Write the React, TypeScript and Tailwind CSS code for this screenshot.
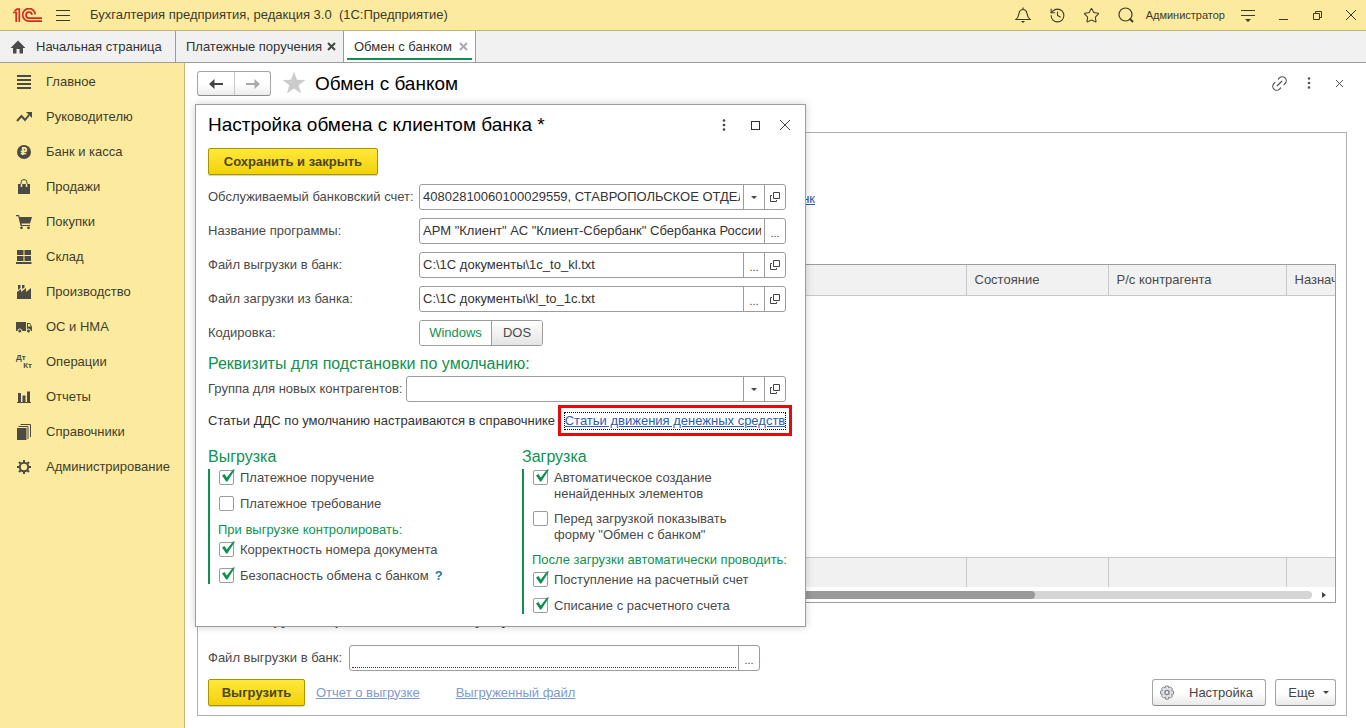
import type { ReactNode } from 'react';
import { Link2, Star, History } from 'lucide-react';

function Svg({ children, size = 16 }: { children: ReactNode; size?: number }) {
  return (
    <svg width={size} height={size} viewBox="0 0 16 16" fill="currentColor" aria-hidden="true">
      {children}
    </svg>
  );
}

const sections: { label: string; icon: ReactNode }[] = [
  { label: 'Главное', icon: <Svg><path d="M1 1h14v2H1zM1 5h14v2H1zM1 9h14v2H1zM1 13h14v2H1z" /></Svg> },
  {
    label: 'Руководителю',
    icon: (
      <Svg>
        <path d="M1 12l4.5-5 3.5 4 4-5" fill="none" stroke="currentColor" strokeWidth="2" />
        <path d="M10 3h6v6z" />
      </Svg>
    )
  },
  {
    label: 'Банк и касса',
    icon: (
      <span className="flex size-[14px] items-center justify-center rounded-full bg-[#4b4a45] font-['DejaVu_Sans'] text-[10px] font-bold leading-none text-[#fceb9e]">₽</span>
    )
  },
  {
    label: 'Продажи',
    icon: (
      <Svg>
        <path d="M2 5h12v10H2z" />
        <path d="M5.500 8V4a2.500 2.500 0 0 1 5 0v4" fill="none" stroke="#fceb9e" strokeWidth="1.500" />
        <path d="M5 5V3.500a3 3 0 0 1 6 0V5" fill="none" stroke="currentColor" strokeWidth="1" />
      </Svg>
    )
  },
  {
    label: 'Покупки',
    icon: (
      <Svg>
        <path d="M0 1h3l.7 2H16l-2 6.500H5.500l.3 1.500H14v1H4.600L2.200 2.200H0z" />
        <circle cx="5.500" cy="13.800" r="1.400" />
        <circle cx="12.500" cy="13.800" r="1.400" />
      </Svg>
    )
  },
  { label: 'Склад', icon: <Svg><path d="M1 1h6.500v5H1zM8.500 1H15v5H8.500zM1 7h6.500v5H1zM8.500 7H15v5H8.500zM0 13h15.500v2H0z" /></Svg> },
  { label: 'Производство', icon: <Svg><path d="M1 15V8l4-3v3l5-4v4l5-4v11zM2 1h2.500v3L2 6zM6 1h2.500v2.500L6 5z" /></Svg> },
  {
    label: 'ОС и НМА',
    icon: (
      <Svg>
        <path d="M0 3h10v9H0zM11 4h3l2 4v4h-5z" />
        <path d="M12 5h1.700l1 2.500H12z" fill="#fceb9e" />
        <circle cx="3.800" cy="12" r="2" stroke="#fceb9e" />
        <circle cx="12.500" cy="12" r="2" stroke="#fceb9e" />
      </Svg>
    )
  },
  {
    label: 'Операции',
    icon: (
      <span className="flex w-4 flex-col text-[8px] font-bold leading-[8px]">
        <span>Дт</span>
        <span className="self-end">Кт</span>
      </span>
    )
  },
  { label: 'Отчеты', icon: <Svg><path d="M1 13h14v1H1zM2 4h3v9H2zM6.500 6.500h3V13h-3zM11 2.500h3V13h-3z" /></Svg> },
  {
    label: 'Справочники',
    icon: (
      <Svg>
        <path d="M1 4h9.500v12H1z" />
        <path d="M2.500 2.500h9.500V15M4.500.5H14.500V13" fill="none" stroke="currentColor" strokeWidth="1" />
      </Svg>
    )
  },
  {
    label: 'Администрирование',
    icon: (
      <Svg>
        <circle cx="8" cy="8" r="4.200" fill="none" stroke="currentColor" strokeWidth="2" />
        <path
          d="M8 1v3M8 12v3M1 8h3M12 8h3M3 3l2 2M11 11l2 2M13 3l-2 2M5 11l-2 2"
          stroke="currentColor"
          strokeWidth="2"
        />
      </Svg>
    )
  }
];

function Dots() {
  return <Svg><circle cx="8" cy="3.500" r="1.300" /><circle cx="8" cy="8" r="1.300" /><circle cx="8" cy="12.500" r="1.300" /></Svg>;
}

function Cross({ size, width = 1 }: { size: number; width?: number }) {
  return (
    <svg width={size} height={size} viewBox={`0 0 ${size} ${size}`} stroke="currentColor" strokeWidth={width} aria-hidden="true">
      <path d={`M1 1L${size - 1} ${size - 1}M${size - 1} 1L1 ${size - 1}`} />
    </svg>
  );
}

function Caret() {
  return <svg width="6" height="3" viewBox="0 0 6 3" fill="currentColor" aria-hidden="true"><path d="M0 0h6L3 3z" /></svg>;
}

function OpenIcon() {
  return (
    <svg width="10" height="10" viewBox="0 0 10 10" fill="none" stroke="currentColor" aria-hidden="true">
      <path d="M3.500.5h6v6h-6zM2 3.500H.5v6h6V8" />
    </svg>
  );
}

type Action = 'list' | 'pick' | 'open';
const actionNames = { list: 'Показать список', pick: 'Выбрать', open: 'Открыть' };

function Field({ id, value, actions, required }: { id: string; value: string; actions: Action[]; required?: boolean }) {
  return (
    <div className="flex h-[26px] min-w-0 flex-1 overflow-hidden rounded-[3px] border border-[#9c9c9c] bg-white">
      <div className="flex min-w-0 flex-1 flex-col px-[2px] py-[2px]">
        <input
          id={id}
          defaultValue={value}
          className="min-h-0 w-full flex-1 bg-transparent px-px text-[#333] outline-none"
        />
        {required && <div className="border-b border-dotted border-b-[#c00000]" />}
      </div>
      {actions.map(a => (
        <button key={a} type="button" aria-label={actionNames[a]} className="flex w-[21px] items-center justify-center border-l border-[#9c9c9c] text-[#444]">
          {a === 'list' && <Caret />}
          {a === 'pick' && <span className="pt-1 text-[11px]">...</span>}
          {a === 'open' && <OpenIcon />}
        </button>
      ))}
    </div>
  );
}

function Check({ label, checked, children }: { label: string; checked?: boolean; children?: ReactNode }) {
  return (
    <div className="flex">
      <label className="flex items-start gap-[5px] whitespace-pre-line">
        <span className="relative size-4 shrink-0">
          <input
            type="checkbox"
            defaultChecked={checked}
            className="peer block size-[15px] appearance-none rounded-[2px] border border-[#9c9c9c] bg-white"
          />
          <svg className="pointer-events-none absolute -top-px left-px hidden peer-checked:block" width="15" height="14" viewBox="0 0 15 14" aria-hidden="true">
            <path d="M2 6.500l2.500-1.500 2.300 3.500L13 .5h2L7.700 12Q6.800 13.300 5.800 12z" fill="#0f9250" />
          </svg>
        </span>
        {label}
      </label>
      {children}
    </div>
  );
}

const yellowButton =
  'h-[27px] rounded-[2px] border border-[#a89600] bg-linear-to-b from-[#ffe838] to-[#f2d200] font-bold text-[#4d4615] shadow-[0_1px_1px_#00000030]';
const grayButton =
  'flex h-[27px] items-center rounded-[3px] border border-[#a5a5a5] border-b-[#8a8a8a] bg-linear-to-b from-white from-50% to-[#e9e9e9] text-[#444]';

function SettingsDialog() {
  const rows: { id: string; label: string; value: string; actions: Action[] }[] = [
    { id: 'account', label: 'Обслуживаемый банковский счет:', value: '40802810060100029559, СТАВРОПОЛЬСКОЕ ОТДЕЛ', actions: ['list', 'open'] },
    { id: 'program', label: 'Название программы:', value: 'АРМ "Клиент" АС "Клиент-Сбербанк" Сбербанка России', actions: ['pick'] },
    { id: 'export', label: 'Файл выгрузки в банк:', value: 'C:\\1С документы\\1c_to_kl.txt', actions: ['pick', 'open'] },
    { id: 'import', label: 'Файл загрузки из банка:', value: 'C:\\1С документы\\kl_to_1c.txt', actions: ['pick', 'open'] }
  ];

  return (
    <section role="dialog" aria-labelledby="dialog-title" className="absolute left-[195px] top-[104px] w-[611px] border border-[#9c9c9c] bg-white pb-3 pl-3 shadow-[0_0_8px_#00000030]">
      <div className="mb-[3px] flex h-10 items-center pr-[14px]">
        <h2 id="dialog-title" className="flex-1 text-[19px] text-black">Настройка обмена с клиентом банка *</h2>
        <div className="flex items-center gap-[19px] text-[#444]">
          <button type="button" aria-label="Еще" className="w-4"><Dots /></button>
          <button type="button" aria-label="Развернуть" className="size-[9px] border border-[#333]" />
          <button type="button" aria-label="Закрыть"><Cross size={12} /></button>
        </div>
      </div>
      <div className="pr-[19px]">
        <button type="button" className={`${yellowButton} w-[170px]`}>Сохранить и закрыть</button>
        <div className="mt-[9px] flex flex-col gap-2">
          {rows.map(r => (
            <div key={r.id} className="flex items-center">
              <label htmlFor={r.id} className="w-[211px] shrink-0">{r.label}</label>
              <Field id={r.id} value={r.value} actions={r.actions} />
            </div>
          ))}
          <div className="flex items-center">
            <span className="w-[211px] shrink-0">Кодировка:</span>
            <div className="flex h-[26px] overflow-hidden rounded-[3px] border border-[#9c9c9c]">
              <button type="button" aria-pressed="true" className="w-[72px] border-r border-[#9c9c9c] bg-white text-[#0f9250]">Windows</button>
              <button type="button" aria-pressed="false" className="w-[50px] bg-linear-to-b from-white to-[#e4e4e4]">DOS</button>
            </div>
          </div>
        </div>
        <h3 className="flex h-[30px] items-center pt-1.5 text-[16px] text-[#0f9250]">Реквизиты для подстановки по умолчанию:</h3>
        <div className="flex items-center">
          <label htmlFor="group" className="w-[198px] shrink-0">Группа для новых контрагентов:</label>
          <Field id="group" value="" actions={['list', 'open']} />
        </div>
      </div>
      <div className="mt-[3px] flex items-center gap-1 text-[#333]">
        <span className="w-[346px] whitespace-nowrap">Статьи ДДС по умолчанию настраиваются в справочнике</span>
        <div className="flex h-[31px] w-[234px] items-center justify-center border-3 border-[#e60a0f]">
          <a href="#articles" className="whitespace-nowrap border border-dotted border-black leading-4 text-[#2d5cb0] underline">Статьи движения денежных средств</a>
        </div>
      </div>
      <div className="mt-[9px] flex items-start">
        <div className="w-[314px]">
          <h3 className="text-[16px] leading-6 text-[#0f9250]">Выгрузка</h3>
          <div className="flex flex-col gap-[10px] border-l-2 border-[#0f9250] pl-[9px] pt-px leading-4">
            <Check label="Платежное поручение" checked />
            <Check label="Платежное требование" />
            <div className="flex flex-col gap-1">
              <h4 className="-ml-px text-[#0f9250]">При выгрузке контролировать:</h4>
              <Check label="Корректность номера документа" checked />
            </div>
            <Check label="Безопасность обмена с банком" checked>
              <button type="button" aria-label="Справка" className="ml-1.5 font-bold text-[#1c7ca8]">?</button>
            </Check>
          </div>
        </div>
        <div>
          <h3 className="text-[16px] leading-6 text-[#0f9250]">Загрузка</h3>
          <div className="flex flex-col border-l-2 border-[#0f9250] pl-[9px] pt-px leading-4">
            <Check label={'Автоматическое создание\nненайденных элементов'} checked />
            <div className="my-[9px]">
              <Check label={'Перед загрузкой показывать\nформу "Обмен с банком"'} />
            </div>
            <h4 className="-ml-px mb-1 text-[#0f9250]">После загрузки автоматически проводить:</h4>
            <Check label="Поступление на расчетный счет" checked />
            <div className="mt-[10px]">
              <Check label="Списание с расчетного счета" checked />
            </div>
          </div>
        </div>
      </div>
    </section>
  );
}

function PaymentsTable() {
  const cell = 'border-l border-[#c8c8c8] px-2';
  return (
    <div className="mt-[55px] flex min-h-0 flex-1 flex-col border border-[#9c9c9c]">
      <div className="min-h-0 flex-1">
        <table className="h-full w-full table-fixed border-collapse text-left">
          <colgroup>
            <col />
            <col className="w-[142px]" />
            <col className="w-[178px]" />
            <col className="w-[49px]" />
          </colgroup>
          <thead className="bg-[#f1f1f1]">
            <tr className="h-[30px] border-b border-[#c8c8c8]">
              <td />
              <th className={`${cell} font-normal`}>Состояние</th>
              <th className={`${cell} font-normal`}>Р/с контрагента</th>
              <th className={`${cell} overflow-hidden pr-0 font-normal`}>Назнач</th>
            </tr>
          </thead>
          <tbody>
            <tr><td colSpan={4} /></tr>
          </tbody>
          <tfoot className="bg-[#f1f1f1]">
            <tr className="h-[30px] border-t border-[#c8c8c8]">
              <td />
              <td className={cell} />
              <td className={cell} />
              <td className={cell} />
            </tr>
          </tfoot>
        </table>
      </div>
      <div className="flex h-[15px] items-center gap-[10px] pl-9 pr-[9px] text-[#444]">
        <div className="h-2 flex-1 rounded-full bg-[#d5d5d5]">
          <div className="h-2 w-[74%] rounded-full bg-[#999]" />
        </div>
        <svg width="4" height="6" viewBox="0 0 4 6" fill="currentColor" aria-hidden="true"><path d="M0 0l4 3-4 3z" /></svg>
      </div>
    </div>
  );
}

export default function App() {
  return (
    <div className="relative flex h-screen min-h-[700px] flex-col overflow-hidden bg-white font-['Liberation_Sans',Arial,sans-serif] text-[13px] text-[#4a4a4a]">
      <header className="flex h-[31px] shrink-0 items-center border-b border-[#bdb27c] bg-[#fceb9e] pl-[13px] pr-[9px] text-[#3d3a2c]">
        <svg width="30" height="15" viewBox="0 0 30 15" fill="none" stroke="#d8291c" strokeWidth="1.700" role="img" aria-label="1С">
          <path d="M0 4.500h3.200V14M1.500 3L4 1.200h2.300V14" />
          <path d="M22.200 6.500A6.300 6.300 0 1 0 16 13.200H29M19 6.800A3 3 0 1 0 16 10.200H29" />
        </svg>
        <button type="button" aria-label="Меню" className="ml-[13px] flex w-[14px] flex-col gap-1">
          <span className="h-px bg-current" />
          <span className="h-px bg-current" />
          <span className="h-px bg-current" />
        </button>
        <h1 className="ml-5 flex-1 whitespace-pre">Бухгалтерия предприятия, редакция 3.0  (1С:Предприятие)</h1>
        <button type="button" aria-label="Уведомления">
          <svg width="16" height="16" viewBox="0 0 16 16" fill="none" stroke="currentColor" strokeWidth="1.200" aria-hidden="true">
            <path d="M1 12.500h14c-2-1.500-2.500-3-3-6C11.600 4 10.500 2.500 8 2.500S4.400 4 4 6.500c-.5 3-1 4.500-3 6zM8 .5v2" />
            <path d="M6 14h4l-2 2z" fill="currentColor" stroke="none" />
          </svg>
        </button>
        <button type="button" aria-label="История" className="ml-[18px]"><History size={17} strokeWidth={1.5} /></button>
        <button type="button" aria-label="Избранное" className="ml-[17px]"><Star size={17} strokeWidth={1.5} /></button>
        <button type="button" aria-label="Поиск" className="ml-[18px]">
          <svg width="16" height="16" viewBox="0 0 16 16" fill="none" stroke="currentColor" aria-hidden="true">
            <circle cx="7.500" cy="7.500" r="6.500" strokeWidth="1.200" />
            <path d="M11.500 11.500l3.500 3.500" strokeWidth="2" />
          </svg>
        </button>
        <button type="button" className="ml-3 text-[11px]">Администратор</button>
        <button type="button" aria-label="Настройки" className="ml-4">
          <svg width="14" height="13" viewBox="0 0 14 13" fill="currentColor" aria-hidden="true"><path d="M0 1h14v1H0zM0 6h14v1H0zM4 10h6l-3 3z" /></svg>
        </button>
        <button type="button" aria-label="Свернуть" className="ml-6 h-[10px] w-[9px] border-b border-current" />
        <button type="button" aria-label="Восстановить" className="ml-[25px]">
          <svg width="9" height="9" viewBox="0 0 9 9" fill="none" stroke="currentColor" aria-hidden="true"><path d="M.5 2.500h6v6h-6zM2.500 2V.5h6v6H7" /></svg>
        </button>
        <button type="button" aria-label="Закрыть" className="ml-[23px]"><Cross size={12} /></button>
      </header>

      <nav className="flex h-8 shrink-0 border-b border-[#9c9c9c] bg-[#f1f1f1] text-[#333]">
        <a href="#home" className="flex w-[176px] items-center border-r border-[#9c9c9c] pl-[10px]">
          <Svg><path d="M8 1.500L.5 9H3v5.500h3.500V10h3v4.500H13V9h2.500z" fill="#4a4a4a" /></Svg>
          <span className="ml-[10px]">Начальная страница</span>
        </a>
        <div className="flex w-[168px] items-center border-r border-[#9c9c9c] pl-[10px]">
          <a href="#orders" className="w-[141px] whitespace-nowrap">Платежные поручения</a>
          <button type="button" aria-label="Закрыть вкладку" className="text-[#444]"><Cross size={9} width={2} /></button>
        </div>
        <div className="flex w-[132px] flex-col border-r border-[#9c9c9c] bg-white px-[3px]">
          <div className="flex flex-1 items-center pl-[7px] pt-1">
            <a href="#exchange" aria-current="page" className="w-[105px] whitespace-nowrap">Обмен с банком</a>
            <button type="button" aria-label="Закрыть вкладку" className="text-[#aaa]"><Cross size={9} width={2} /></button>
          </div>
          <div className="mb-[2px] h-[2px] bg-[#0f9250]" />
        </div>
      </nav>

      <div className="flex min-h-0 flex-1">
        <aside className="w-[185px] shrink-0 border-r border-[#c4b97f] bg-[#fceb9e] pt-px text-[#403d2e]">
          {sections.map(s => (
            <a key={s.label} href="#section" className="flex h-[35px] items-center pl-4">
              <span className="flex w-4 justify-center text-[#4b4a45]">{s.icon}</span>
              <span className="ml-[14px]">{s.label}</span>
            </a>
          ))}
        </aside>

        <main className="flex min-w-0 flex-1 flex-col pb-3 pl-3 pr-[19px]">
          <div className="flex h-[69px] shrink-0 items-start pt-2">
            <div className="flex h-[25px] overflow-hidden rounded-[3px] border border-[#a5a5a5] border-b-[#8a8a8a] bg-linear-to-b from-white from-50% to-[#ececec]">
              {['Назад', 'Вперед'].map((name, i) => (
                <button key={name} type="button" aria-label={name} className={`flex w-9 items-center justify-center ${i ? 'border-l border-[#c8c8c8] text-[#aaa]' : 'text-[#444]'}`}>
                  <svg className={i ? 'rotate-180' : ''} width="14" height="10" viewBox="0 0 14 10" aria-hidden="true">
                    <path d="M0 5l5.500-5v4H14v2H5.500v4z" fill="currentColor" />
                  </svg>
                </button>
              ))}
            </div>
            <button type="button" aria-label="В избранное" className="ml-[11px] text-[#ccc]">
              <svg width="24" height="24" viewBox="0 0 24 24" fill="currentColor" aria-hidden="true">
                <path d="M12 0.500l2.900 8.200 8.600.2-6.800 5.300 2.400 8.300L12 17.600l-7.100 4.900 2.400-8.300L.5 8.900l8.600-.2z" />
              </svg>
            </button>
            <h2 className="ml-[9px] flex-1 text-[19px] leading-[26px] text-black">Обмен с банком</h2>
            <div className="flex h-6 items-center text-[#555]">
              <button type="button" aria-label="Ссылка"><Link2 className="-rotate-45" size={19} strokeWidth={1.5} /></button>
              <button type="button" aria-label="Еще" className="ml-3"><Dots /></button>
              <button type="button" aria-label="Закрыть" className="ml-[18px] mr-[3px]"><Cross size={9} /></button>
            </div>
          </div>

          <div className="flex min-h-0 flex-1 flex-col border border-[#b0b0b0] px-[10px] pb-[9px]">
            <div className="flex w-[607px] justify-end pt-14 leading-5">
              <a href="#bank" className="text-[#2d5cb0] underline">банк</a>
            </div>
            <PaymentsTable />
            <p className="mt-[10px] font-bold leading-4">Всего выгружено с расчетного счета на сумму</p>
            <div className="mt-4 flex items-center">
              <label htmlFor="file" className="w-[141px] shrink-0">Файл выгрузки в банк:</label>
              <div className="flex w-[411px]">
                <Field id="file" value="" actions={['pick']} required />
              </div>
            </div>
            <div className="mt-2 flex items-center text-[#7d9bd0]">
              <button type="button" className={`${yellowButton} w-[97px]`}>Выгрузить</button>
              <a href="#report" className="ml-[11px] underline">Отчет о выгрузке</a>
              <a href="#file" className="ml-9 flex-1 underline">Выгруженный файл</a>
              <button type="button" className={`${grayButton} w-[114px] pl-1.5`}>
                <svg width="16" height="16" viewBox="0 0 16 16" fill="#dfe1e3" stroke="#85888b" aria-hidden="true">
                  <path d="M6.600 1h2.800l.4 1.900 1.700-1 2 2-1.100 1.700 2.100.5v2.800l-2.100.5 1.100 1.700-2 2-1.700-1.100-.4 2.200H6.600L6.200 12l-1.700 1.100-2-2 1.100-1.700-2.100-.5V6.100l2.100-.5-1.100-1.700 2-2 1.700 1z" />
                  <circle cx="8" cy="7.500" r="2" fill="#fff" strokeWidth="1.500" />
                </svg>
                <span className="ml-[14px]">Настройка</span>
              </button>
              <button type="button" className={`${grayButton} ml-[9px] w-[61px] justify-center gap-2 pl-1.5`}>
                Еще <Caret />
              </button>
            </div>
          </div>
        </main>
      </div>

      <SettingsDialog />
    </div>
  );
}
